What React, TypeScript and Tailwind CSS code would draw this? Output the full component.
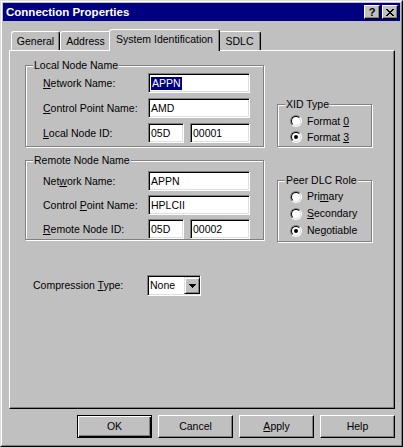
import type { ReactNode } from 'react';

const raised =
  'border border-t-white border-l-white border-r-black border-b-black shadow-[inset_-1px_-1px_0_#808080]';
const sunken =
  'border border-t-[#808080] border-l-[#808080] border-r-white border-b-white shadow-[inset_1px_1px_0_#000,inset_-1px_-1px_0_#dfdfdf]';
const etched = 'border border-[#808080] shadow-[inset_1px_1px_0_#fff,1px_1px_0_#fff]';

function TitleButton({ children, className = '' }: { children: ReactNode; className?: string }) {
  return (
    <div
      className={`w-[16px] h-[14px] bg-[#c0c0c0] ${raised} flex items-center justify-center ${className}`}
    >
      {children}
    </div>
  );
}

function CloseGlyph() {
  return (
    <svg width="8" height="7" viewBox="0 0 8 7" shapeRendering="crispEdges">
      <path
        d="M0 0h2v1h-2zM6 0h2v1h-2zM1 1h2v1h-2zM5 1h2v1h-2zM2 2h4v1h-4zM3 3h2v1h-2zM2 4h4v1h-4zM1 5h2v1h-2zM5 5h2v1h-2zM0 6h2v1h-2zM6 6h2v1h-2z"
        fill="#000"
      />
    </svg>
  );
}

function Tab({ children, w, active = false }: { children: ReactNode; w: string; active?: boolean }) {
  if (active) {
    return (
      <div
        className={`relative z-10 -mx-[2px] -mb-[1px] h-[22px] ${w} bg-[#c0c0c0] border-t border-l border-r border-t-white border-l-white border-r-black shadow-[inset_-1px_0_0_#808080] rounded-t-[3px] flex justify-center pt-[3px]`}
      >
        {children}
      </div>
    );
  }
  return (
    <div
      className={`h-[19px] ${w} border-t border-l border-r border-t-white border-l-white border-r-black shadow-[inset_-1px_0_0_#808080] rounded-t-[3px] flex justify-center pt-[3px]`}
    >
      {children}
    </div>
  );
}

function Group({ title, className = '', children }: { title: string; className?: string; children: ReactNode }) {
  return (
    <div className={`${etched} flex flex-col ${className}`}>
      <span className="-mt-[7px] ml-[7px] px-[1px] h-[13px] w-fit bg-[#c0c0c0]">{title}</span>
      {children}
    </div>
  );
}

function Field({ w, children }: { w: string; children: ReactNode }) {
  return (
    <div className={`${sunken} ${w} h-[20px] bg-white flex items-center pl-[2px]`}>{children}</div>
  );
}

function Row({ label, children }: { label: ReactNode; children: ReactNode }) {
  return (
    <div className="h-[20px] flex items-center pl-[17px]">
      <span className="w-[105px]">{label}</span>
      {children}
    </div>
  );
}

function Radio({ checked = false, h, children }: { checked?: boolean; h: string; children: ReactNode }) {
  return (
    <div className={`${h} flex items-center pl-[12px]`}>
      <span className="w-[12px] h-[12px] rounded-full border border-t-[#808080] border-l-[#808080] border-r-white border-b-white flex">
        <span className="flex-1 rounded-full border border-t-black border-l-black border-r-[#dfdfdf] border-b-[#dfdfdf] bg-white flex items-center justify-center">
          {checked && <span className="w-[4px] h-[4px] rounded-full bg-black" />}
        </span>
      </span>
      <span className="ml-[5px]">{children}</span>
    </div>
  );
}

function Button({ children, isDefault = false }: { children: ReactNode; isDefault?: boolean }) {
  const frame = isDefault
    ? 'border border-black shadow-[inset_1px_1px_0_#fff,inset_-1px_-1px_0_#000,inset_-2px_-2px_0_#808080]'
    : raised;
  return (
    <div className={`w-[75px] h-[23px] ${frame} flex items-center justify-center`}>{children}</div>
  );
}

export default function App() {
  return (
    <div className="w-[403px] h-[447px] bg-[#c0c0c0] border border-t-[#dfdfdf] border-l-[#dfdfdf] border-r-black border-b-black font-['Liberation_Sans',Arial,sans-serif] text-[10.5px] leading-[13px] text-black">
      <div className="h-full border border-t-white border-l-white border-r-[#808080] border-b-[#808080] p-px flex flex-col">
        {/* title bar */}
        <div className="h-[18px] bg-[#000080] flex items-center pl-[3px] pr-[2px]">
          <span className="flex-1 text-white font-bold text-[11.5px]">Connection Properties</span>
          <TitleButton>
            <span className="font-bold text-[11px] leading-none">?</span>
          </TitleButton>
          <TitleButton className="ml-[2px]">
            <CloseGlyph />
          </TitleButton>
        </div>

        <div className="flex-1 flex flex-col pt-[8px] pl-[6px] pr-[5px]">
          {/* tabs */}
          <div className="h-[21px] flex items-end pl-[2px]">
            <Tab w="w-[49px]">General</Tab>
            <Tab w="w-[51px]">Address</Tab>
            <Tab w="w-[111px]" active>
              System Identification
            </Tab>
            <Tab w="w-[43px]">SDLC</Tab>
          </div>

          {/* page */}
          <div className="h-[359px] border-t border-l border-r border-b border-t-white border-l-white border-r-black border-b-black shadow-[inset_-1px_-1px_0_#808080] flex">
            <div className="ml-[15px] mt-[14px] flex flex-col">
              <Group title="Local Node Name" className="w-[239px] h-[82px]">
                <div className="mt-[1px] flex flex-col gap-[5px]">
                  <Row
                    label={
                      <>
                        <u>N</u>etwork Name:
                      </>
                    }
                  >
                    <Field w="w-[102px]">
                      <span className="bg-[#000080] text-white px-px">APPN</span>
                    </Field>
                  </Row>
                  <Row
                    label={
                      <>
                        <u>C</u>ontrol Point Name:
                      </>
                    }
                  >
                    <Field w="w-[102px]">AMD</Field>
                  </Row>
                  <Row
                    label={
                      <>
                        <u>L</u>ocal Node ID:
                      </>
                    }
                  >
                    <Field w="w-[36px]">05D</Field>
                    <div className="ml-[6px]">
                      <Field w="w-[60px]">00001</Field>
                    </div>
                  </Row>
                </div>
              </Group>

              <Group title="Remote Node Name" className="mt-[13px] w-[239px] h-[80px]">
                <div className="mt-[4px] flex flex-col gap-[4px]">
                  <Row
                    label={
                      <>
                        Net<u>w</u>ork Name:
                      </>
                    }
                  >
                    <Field w="w-[102px]">APPN</Field>
                  </Row>
                  <Row
                    label={
                      <>
                        Control <u>P</u>oint Name:
                      </>
                    }
                  >
                    <Field w="w-[102px]">HPLCII</Field>
                  </Row>
                  <Row
                    label={
                      <>
                        <u>R</u>emote Node ID:
                      </>
                    }
                  >
                    <Field w="w-[36px]">05D</Field>
                    <div className="ml-[6px]">
                      <Field w="w-[60px]">00002</Field>
                    </div>
                  </Row>
                </div>
              </Group>

              <div className="mt-[35px] h-[21px] flex items-center pl-[8px]">
                <span className="w-[114px]">
                  Compression <u>T</u>ype:
                </span>
                <div className={`${sunken} w-[54px] h-[21px] bg-white flex items-center pl-[2px]`}>
                  <span className="flex-1">None</span>
                  <div className="w-[16px] h-[17px] bg-[#c0c0c0] border border-t-[#dfdfdf] border-l-[#dfdfdf] border-r-black border-b-black shadow-[inset_1px_1px_0_#fff,inset_-1px_-1px_0_#808080] flex items-center justify-center">
                    <svg width="7" height="4" viewBox="0 0 7 4" shapeRendering="crispEdges">
                      <path d="M0 0h7v1h-7zM1 1h5v1h-5zM2 2h3v1h-3zM3 3h1v1h-1z" fill="#000" />
                    </svg>
                  </div>
                </div>
              </div>
            </div>

            <div className="ml-[13px] mt-[53px] flex flex-col">
              <Group title="XID Type" className="w-[95px] h-[43px]">
                <div className="mt-[2px]">
                  <Radio h="h-[16px]">
                    Format <u>0</u>
                  </Radio>
                  <Radio h="h-[16px]" checked>
                    Format <u>3</u>
                  </Radio>
                </div>
              </Group>

              <Group title="Peer DLC Role" className="mt-[33px] w-[95px] h-[62px]">
                <div className="mt-[1px]">
                  <Radio h="h-[17px]">
                    Pri<u>m</u>ary
                  </Radio>
                  <Radio h="h-[17px]">
                    <u>S</u>econdary
                  </Radio>
                  <Radio h="h-[17px]" checked>
                    Ne<u>g</u>otiable
                  </Radio>
                </div>
              </Group>
            </div>
          </div>

          {/* buttons */}
          <div className="mt-[6px] flex justify-end gap-[6px]">
            <Button isDefault>OK</Button>
            <Button>Cancel</Button>
            <Button>
              <u>A</u>pply
            </Button>
            <Button>Help</Button>
          </div>
        </div>
      </div>
    </div>
  );
}
